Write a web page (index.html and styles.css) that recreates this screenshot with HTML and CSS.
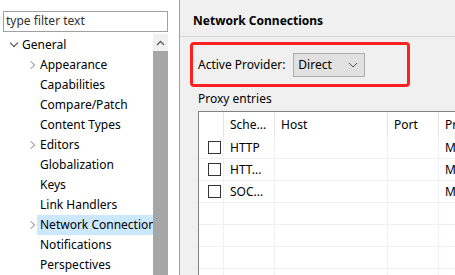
FILE: index.html
```html
<!DOCTYPE html>
<html lang="en">
<head>
  <meta charset="UTF-8" />
  <title>Preferences - Network Connections</title>
  <link rel="stylesheet" href="styles.css">
</head>
<body>
  <div class="nav">
    <div class="filter">type filter text</div>
    <div class="tree-wrap">
      <ul class="tree">
        <li class="node root"><span class="twist open"></span>General</li>
        <li class="node"><span class="twist"></span>Appearance</li>
        <li class="node"><span class="twist none"></span>Capabilities</li>
        <li class="node"><span class="twist none"></span>Compare/Patch</li>
        <li class="node"><span class="twist none"></span>Content Types</li>
        <li class="node"><span class="twist"></span>Editors</li>
        <li class="node"><span class="twist none"></span>Globalization</li>
        <li class="node"><span class="twist none"></span>Keys</li>
        <li class="node"><span class="twist none"></span>Link Handlers</li>
        <li class="node"><span class="twist"></span><span class="sel">Network Connections</span></li>
        <li class="node"><span class="twist none"></span>Notifications</li>
        <li class="node"><span class="twist none"></span>Perspectives</li>
      </ul>
      <div class="scrollbar">
        <div class="arrow">
          <svg width="9" height="6" viewBox="0 0 9 6"><path d="M1 5 L4.5 1.5 L8 5" fill="none" stroke="#606060" stroke-width="1.4"/></svg>
        </div>
        <div class="thumb"></div>
      </div>
    </div>
  </div>

  <div class="page">
    <div class="page-title">Network Connections</div>
    <div class="provider">
      <span>Active Provider:</span>
      <div class="combo">
        <span>Direct</span>
        <svg width="10" height="6" viewBox="0 0 10 6"><path d="M1 1 L5 5 L9 1" fill="none" stroke="#555" stroke-width="1"/></svg>
      </div>
    </div>
    <div class="group-label">Proxy entries</div>
    <div class="table">
      <div class="row head">
        <div class="cell c-check"></div>
        <div class="cell c-scheme">Sche...</div>
        <div class="cell c-host">Host</div>
        <div class="cell c-port">Port</div>
        <div class="cell c-prov">Provider</div>
      </div>
      <div class="row">
        <div class="cell c-check"><span class="box"></span></div>
        <div class="cell c-scheme">HTTP</div>
        <div class="cell c-host"></div>
        <div class="cell c-port"></div>
        <div class="cell c-prov">Manual</div>
      </div>
      <div class="row">
        <div class="cell c-check"><span class="box"></span></div>
        <div class="cell c-scheme">HTT...</div>
        <div class="cell c-host"></div>
        <div class="cell c-port"></div>
        <div class="cell c-prov">Manual</div>
      </div>
      <div class="row">
        <div class="cell c-check"><span class="box"></span></div>
        <div class="cell c-scheme">SOC...</div>
        <div class="cell c-host"></div>
        <div class="cell c-port"></div>
        <div class="cell c-prov">Manual</div>
      </div>
      <div class="row"><div class="cell c-check"></div><div class="cell c-scheme"></div><div class="cell c-host"></div><div class="cell c-port"></div><div class="cell c-prov"></div></div>
      <div class="row"><div class="cell c-check"></div><div class="cell c-scheme"></div><div class="cell c-host"></div><div class="cell c-port"></div><div class="cell c-prov"></div></div>
      <div class="row"><div class="cell c-check"></div><div class="cell c-scheme"></div><div class="cell c-host"></div><div class="cell c-port"></div><div class="cell c-prov"></div></div>
      <div class="row"><div class="cell c-check"></div><div class="cell c-scheme"></div><div class="cell c-host"></div><div class="cell c-port"></div><div class="cell c-prov"></div></div>
    </div>
  </div>
</body>
</html>
```

FILE: styles.css
```css
* {
  box-sizing: border-box;
}

body {
  margin: 0;
  width: 455px;
  height: 275px;
  overflow: hidden;
  display: flex;
  font-family: 'Noto Sans', sans-serif;
  font-size: 12px;
  color: #000;
  background: #fff;
}

/* left navigation */
.nav {
  width: 180px;
  flex: none;
  background: #fff;
  border-right: 1px solid #a0a0a0;
  padding: 11px 0 0 3px;
  display: flex;
  flex-direction: column;
}

.filter {
  width: 165px;
  height: 21px;
  flex: none;
  border: 1px solid #a0a0a0;
  padding-left: 2px;
  line-height: 18px;
  color: #303030;
}

.tree-wrap {
  display: flex;
  margin-top: 2px;
  flex: 1;
  min-height: 0;
}

.tree {
  list-style: none;
  margin: 0;
  padding: 1px 0 0;
  width: 150px;
  overflow: hidden;
}

.node {
  height: 20px;
  line-height: 20px;
  display: flex;
  align-items: center;
  white-space: nowrap;
  padding-left: 22px;
}

.node.root {
  padding-left: 4px;
}

.twist {
  width: 15px;
  height: 20px;
  flex: none;
  position: relative;
}

.twist::after {
  content: "";
  position: absolute;
  left: 3px;
  top: 7px;
  width: 5px;
  height: 5px;
  border-right: 1.5px solid #a0a0a0;
  border-bottom: 1.5px solid #a0a0a0;
  transform: rotate(-45deg);
}

.twist.open::after {
  left: 4px;
  top: 5px;
  border-color: #404040;
  border-width: 0 1.2px 1.2px 0;
  transform: rotate(45deg);
}

.twist.none::after {
  display: none;
}

.sel {
  background: #cce8ff;
  padding-left: 3px;
  margin-left: -3px;
  flex: 1;
  overflow: hidden;
}

.scrollbar {
  width: 15px;
  background: #f0f0f0;
  display: flex;
  flex-direction: column;
}

.arrow {
  height: 17px;
  display: flex;
  justify-content: center;
  align-items: center;
}

.thumb {
  flex: 1;
  background: #a6a6a6;
}

/* right page */
.page {
  flex: 1;
  background: #f0f0f0;
  overflow: hidden;
  display: flex;
  flex-direction: column;
}

.page-title {
  flex: none;
  height: 37px;
  padding: 6px 0 0 13px;
  line-height: 30px;
  font-weight: bold;
  border-bottom: 1px solid #d6d6d6;
}

.provider {
  flex: none;
  margin: 5px 0 0 10px;
  width: 220px;
  height: 45px;
  border: 3px solid #ff2020;
  border-radius: 4px;
  display: flex;
  align-items: center;
  padding-left: 5px;
  gap: 8px;
}

.combo {
  width: 72px;
  height: 24px;
  background: #e1e1e1;
  border: 1px solid #adadad;
  display: flex;
  align-items: center;
  justify-content: space-between;
  padding: 0 6px 0 4px;
}

.group-label {
  flex: none;
  padding-left: 18px;
  height: 24px;
  line-height: 24px;
}

.table {
  margin-left: 18px;
  width: 300px;
  flex: 1;
  background: #fff;
  border: 1px solid #828282;
  border-right: none;
  border-bottom: none;
}

.row {
  display: flex;
  height: 22px;
  border-bottom: 1px solid #f0f0f0;
}

.row.head {
  height: 25px;
  border-bottom: none;
}

.cell {
  flex: none;
  height: 100%;
  display: flex;
  align-items: center;
  padding-left: 6px;
  border-right: 1px solid #eef2f8;
  white-space: nowrap;
  overflow: hidden;
}

.head .cell {
  border-right-color: #e5e5e5;
}

.c-check {
  width: 25px;
  padding-left: 9px;
}

.c-scheme { width: 51px; }
.c-host { width: 113px; }
.c-port { width: 51px; }
.c-prov { width: 60px; }

.box {
  width: 13px;
  height: 13px;
  border: 1px solid #333;
  background: #fff;
}
```
